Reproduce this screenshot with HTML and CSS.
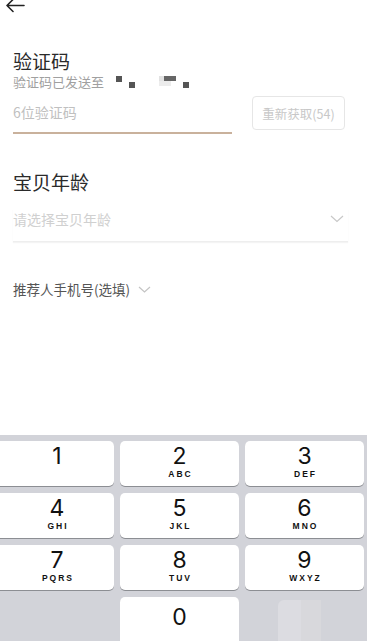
FILE: index.html
```html
<!DOCTYPE html>
<html lang="zh-CN">
<head>
<meta charset="utf-8">
<link rel="stylesheet" href="styles.css">
</head>
<body>
<div class="page">
  <div class="topbar">
    <svg class="back" width="20" height="14" viewBox="0 0 20 14"><path d="M19 6.5H2M8 0.5L2 6.5L8 12.5" fill="none" stroke="#222" stroke-width="1.6" stroke-linecap="round" stroke-linejoin="round"/></svg>
  </div>
  <div class="content">
    <div class="title t1">验证码</div>
    <div class="sub">验证码已发送至
      <span class="mask"><i class="d a"></i><i class="d b"></i><i class="d c"></i><i class="d e"></i></span>
    </div>
    <div class="coderow">
      <div class="codeinput">6位验证码</div>
      <div class="resend">重新获取(54)</div>
    </div>
    <div class="title t2">宝贝年龄</div>
    <div class="select">
      <span class="ph">请选择宝贝年龄</span>
      <svg width="14" height="8" viewBox="0 0 14 8"><path d="M1 1L7 6.5L13 1" fill="none" stroke="#c8c8c8" stroke-width="1.2"/></svg>
    </div>
    <div class="ref">推荐人手机号(选填)
      <svg width="13" height="7" viewBox="0 0 13 7"><path d="M1 1L6.5 6L12 1" fill="none" stroke="#c4c4c4" stroke-width="1.2"/></svg>
    </div>
  </div>
  <div class="keyboard">
    <div class="key"><span class="num">1</span></div>
    <div class="key"><span class="num">2</span><span class="let">ABC</span></div>
    <div class="key"><span class="num">3</span><span class="let">DEF</span></div>
    <div class="key"><span class="num">4</span><span class="let">GHI</span></div>
    <div class="key"><span class="num">5</span><span class="let">JKL</span></div>
    <div class="key"><span class="num">6</span><span class="let">MNO</span></div>
    <div class="key"><span class="num">7</span><span class="let">PQRS</span></div>
    <div class="key"><span class="num">8</span><span class="let">TUV</span></div>
    <div class="key"><span class="num">9</span><span class="let">WXYZ</span></div>
    <div class="blank"></div>
    <div class="key zero"><span class="num">0</span></div>
    <div class="del"><i class="dl"></i><i class="dr"></i></div>
  </div>
</div>
</body>
</html>
```
FILE: styles.css
```css
html, body {
  margin: 0;
  padding: 0;
  background: #fff;
}
body {
  font-family: "Noto Sans CJK SC", "Noto Sans", sans-serif;
  color: #222;
}
.page {
  width: 367px;
  height: 641px;
  display: flex;
  flex-direction: column;
  overflow: hidden;
}
.topbar {
  height: 14px;
  padding-left: 5px;
}
.back {
  display: block;
  margin-top: -1px;
}
.content {
  padding: 0 13px 0 13px;
}
.title {
  font-size: 19px;
  line-height: 24px;
  color: #2a2a2a;
}
.t1 {
  margin-top: 35px;
}
.sub {
  font-size: 13px;
  line-height: 16px;
  color: #a0a0a0;
  margin-top: 1px;
  display: flex;
  align-items: center;
}
.mask {
  position: relative;
  display: inline-block;
  width: 80px;
  height: 16px;
  margin-left: 4px;
}
.d {
  position: absolute;
  background: #555;
  width: 6px;
  height: 6px;
}
.a { left: 8px; top: 2px; }
.b { left: 21px; top: 8px; }
.c { left: 56px; top: 2px; width: 12px; height: 5px; background: #666; box-shadow: -5px 0 0 #e2e2e2, -5px 5px 0 #ececec; }
.e { left: 75px; top: 8px; }
.coderow {
  display: flex;
  align-items: flex-start;
  margin-top: 6px;
}
.codeinput {
  width: 219px;
  font-size: 14px;
  line-height: 20px;
  color: #c0c0c0;
  padding-top: 6px;
  padding-bottom: 10px;
  border-bottom: 2px solid #c9b19c;
}
.resend {
  margin-left: 20px;
  width: 91px;
  height: 32px;
  border: 1px solid #e6e6e6;
  border-radius: 4px;
  font-size: 12.5px;
  color: #c8c8c8;
  display: flex;
  align-items: center;
  justify-content: center;
}
.t2 {
  margin-top: 36px;
}
.select {
  margin-top: 15px;
  width: 335px;
  display: flex;
  align-items: center;
  justify-content: space-between;
  padding-bottom: 12px;
  border-bottom: 1px solid #eeeeee;
  box-shadow: 0 1px 1px #f4f4f4;
}
.select .ph {
  font-size: 14px;
  line-height: 20px;
  color: #d0d0d0;
}
.select svg {
  margin-right: 4px;
}
.ref {
  margin-top: 38px;
  font-size: 13.5px;
  line-height: 18px;
  color: #555;
  display: flex;
  align-items: center;
  gap: 8px;
}
.keyboard {
  margin-top: auto;
  height: 206px;
  background: #d2d3d9;
  display: grid;
  grid-template-columns: 114px 119px 119px;
  grid-auto-rows: 45px;
  column-gap: 6px;
  row-gap: 7px;
  padding-top: 6px;
  box-sizing: border-box;
  overflow: hidden;
}
.key {
  background: #fff;
  border-radius: 5px;
  box-shadow: 0 1px 0 #8c8e93;
  display: flex;
  flex-direction: column;
  align-items: center;
  padding-top: 3px;
  box-sizing: border-box;
}
.key:nth-child(1), .key:nth-child(4), .key:nth-child(7) {
  border-top-left-radius: 0;
  border-bottom-left-radius: 0;
}
.num {
  font-family: "Inter", "Liberation Sans", sans-serif;
  font-size: 23px;
  line-height: 25px;
  color: #111;
}
.let {
  font-family: "Liberation Sans", Arial, sans-serif;
  font-weight: bold;
  font-size: 8.5px;
  letter-spacing: 2px;
  margin-right: -2px;
  line-height: 10px;
  color: #111;
}
.zero {
  height: 50px;
  padding-top: 8px;
}
.del {
  position: relative;
  height: 50px;
}
.dl {
  position: absolute;
  left: 33px;
  top: 3px;
  width: 23px;
  height: 47px;
  background: #dcdce1;
  border-top-left-radius: 6px;
}
.dr {
  position: absolute;
  left: 56px;
  top: 3px;
  width: 20px;
  height: 47px;
  background: #d8d8dc;
}
```
